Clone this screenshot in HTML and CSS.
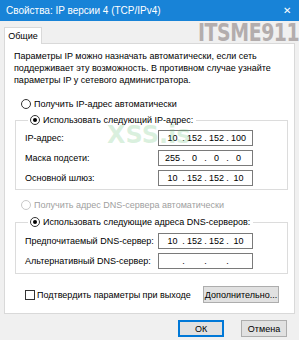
FILE: index.html
```html
<!DOCTYPE html>
<html lang="ru">
<head>
  <meta charset="UTF-8" />
  <title>Свойства: IP версии 4 (TCP/IPv4)</title>
  <link rel="stylesheet" href="styles.css">
</head>
<body>
  <div class="titlebar">
    <span>Свойства: IP версии 4 (TCP/IPv4)</span>
    <span class="close">✕</span>
  </div>
  <div class="mark-top">ITSME911</div>
  <div class="mark-mid">XSS.is</div>

  <div class="window">
    <div class="tab">Общие</div>
    <div class="panel">
      <p class="intro">Параметры IP можно назначать автоматически, если сеть поддерживает эту возможность. В противном случае узнайте параметры IP у сетевого администратора.</p>

      <div class="option"><span class="radio"></span>Получить IP-адрес автоматически</div>

      <fieldset>
        <legend><span class="radio on"></span>Использовать следующий IP-адрес:</legend>
        <div class="row">
          <span>IP-адрес:</span>
          <div class="ip"><b>10</b><i>.</i><b>152</b><i>.</i><b>152</b><i>.</i><b>100</b></div>
        </div>
        <div class="row">
          <span>Маска подсети:</span>
          <div class="ip"><b>255</b><i>.</i><b>0</b><i>.</i><b>0</b><i>.</i><b>0</b></div>
        </div>
        <div class="row">
          <span>Основной шлюз:</span>
          <div class="ip"><b>10</b><i>.</i><b>152</b><i>.</i><b>152</b><i>.</i><b>10</b></div>
        </div>
      </fieldset>

      <div class="option disabled"><span class="radio"></span>Получить адрес DNS-сервера автоматически</div>

      <fieldset class="dns">
        <legend><span class="radio on"></span>Использовать следующие адреса DNS-серверов:</legend>
        <div class="row">
          <span>Предпочитаемый DNS-сервер:</span>
          <div class="ip"><b>10</b><i>.</i><b>152</b><i>.</i><b>152</b><i>.</i><b>10</b></div>
        </div>
        <div class="row">
          <span>Альтернативный DNS-сервер:</span>
          <div class="ip"><b></b><i>.</i><b></b><i>.</i><b></b><i>.</i><b></b></div>
        </div>
      </fieldset>

      <div class="bottom">
        <label class="check"><span class="box"></span>Подтвердить параметры при выходе</label>
        <button class="btn more">Дополнительно...</button>
      </div>
    </div>
    <div class="footer">
      <button class="btn ok">ОК</button>
      <button class="btn">Отмена</button>
    </div>
  </div>
</body>
</html>
```

FILE: styles.css
```css
body { margin: 0; width: 299px; height: 340px; background: #f0f0f0; font-family: "Liberation Sans", Arial, sans-serif; font-size: 9px; color: #000; position: relative; overflow: hidden; }

.titlebar { height: 21px; background: #1883d7; color: #fff; display: flex; align-items: center; justify-content: space-between; padding: 0 8px 0 6px; font-size: 10px; }
.close { font-size: 10px; }

/* watermarks lie over the dialog */
.mark-top { position: absolute; left: 198px; top: 20px; font-family: "DejaVu Sans Condensed", "DejaVu Sans", sans-serif; font-weight: bold; font-size: 25px; line-height: 26px; color: #b3adad; letter-spacing: -0.5px; transform: scaleX(0.84); transform-origin: left top; }
.mark-mid { position: absolute; left: 107px; top: 121px; font-family: "DejaVu Sans", sans-serif; font-weight: bold; font-size: 24px; color: rgba(110, 195, 125, 0.25); }

.window { padding: 6px 4px 0; }
.tab { width: 36px; height: 16px; margin-bottom: -1px; position: relative; z-index: 1; background: #fff; border: 1px solid #d9d9d9; border-bottom: none; display: flex; align-items: center; justify-content: center; }

.panel { box-sizing: border-box; height: 271px; background: #fff; border: 1px solid #d9d9d9; padding: 0 6px 0 10px; }
.intro { margin: 6px 0 0 -1px; line-height: 12px; }

.option { display: flex; align-items: center; height: 12px; margin: 12px 0 0 6px; }
.option.disabled { color: #a0a0a0; margin-top: 9px; }
.option.disabled .radio { border-color: #c8c8c8; }

.radio { box-sizing: border-box; width: 10px; height: 10px; border: 1px solid #333; border-radius: 50%; margin-right: 3px; display: inline-flex; align-items: center; justify-content: center; }
.radio.on::after { content: ""; width: 4px; height: 4px; border-radius: 50%; background: #000; }

fieldset { margin: 4px 0 0; padding: 0 0 3px 9px; border: 1px solid #dcdcdc; }
fieldset.dns { margin-top: 5px; padding-bottom: 4px; }
legend { margin-left: 3px; padding: 0 3px 0 2px; height: 12px; display: flex; align-items: center; }

.row { display: flex; align-items: center; justify-content: space-between; height: 16px; margin-top: 4px; padding-right: 34px; }
fieldset.dns .row:first-of-type { margin-top: 5px; }

.ip { box-sizing: border-box; width: 95px; height: 16px; border: 1px solid #7a7a7a; padding-left: 4px; display: flex; align-items: center; }
.ip b { width: 19px; text-align: center; font-weight: normal; }
.ip i { width: 3px; text-align: center; font-style: normal; }

.bottom { display: flex; align-items: center; justify-content: space-between; height: 17px; margin: 12px 9px 0 10px; }
.check { display: flex; align-items: center; }
.box { box-sizing: border-box; width: 10px; height: 10px; border: 1px solid #333; margin-right: 2px; }

.btn { box-sizing: border-box; height: 17px; padding: 0; background: #e1e1e1; border: 1px solid #adadad; font: inherit; color: #000; }
.more { width: 76px; }

.footer { display: flex; justify-content: flex-end; gap: 17px; margin-top: 6px; padding-right: 8px; }
.footer .btn { width: 46px; }
.btn.ok { border: 1px solid #0078d7; box-shadow: inset 0 0 0 1px #0078d7; }
```
